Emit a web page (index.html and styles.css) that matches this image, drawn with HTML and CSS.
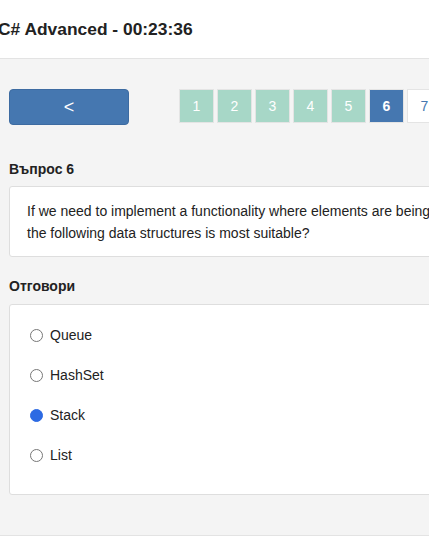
FILE: index.html
```html
<!DOCTYPE html>
<html lang="bg">
<head>
<meta charset="utf-8">
<link rel="stylesheet" href="styles.css">
</head>
<body>
<header class="topbar">
  <h1 class="title">C# Advanced - 00:23:36</h1>
</header>
<main class="content">
  <div class="nav">
    <button class="back">&lt;</button>
    <ol class="pages">
      <li class="page done">1</li>
      <li class="page done">2</li>
      <li class="page done">3</li>
      <li class="page done">4</li>
      <li class="page done">5</li>
      <li class="page active">6</li>
      <li class="page">7</li>
      <li class="page">8</li>
    </ol>
  </div>
  <h2 class="label">Въпрос 6</h2>
  <div class="box question">If we need to implement a functionality where elements are being added and removed in a last-in first-out order, which of<br>the following data structures is most suitable?</div>
  <h2 class="label">Отговори</h2>
  <div class="box answers">
    <label class="answer"><input type="radio" name="a"><span>Queue</span></label>
    <label class="answer"><input type="radio" name="a"><span>HashSet</span></label>
    <label class="answer"><input type="radio" name="a" checked><span>Stack</span></label>
    <label class="answer"><input type="radio" name="a"><span>List</span></label>
  </div>
</main>
<footer class="foot"></footer>
</body>
</html>
```
FILE: styles.css
```css
html, body {
  margin: 0;
  padding: 0;
  background: #fff;
  overflow: hidden;
}
body {
  font-family: "Liberation Sans", Arial, sans-serif;
  color: #222;
  width: 429px;
}
.topbar {
  height: 58px;
  border-bottom: 1px solid #e3e3e3;
  display: flex;
  align-items: center;
  background: #fff;
}
.title {
  margin: 0 0 0 -2px;
  font-size: 17.4px;
  font-weight: bold;
  color: #222;
  white-space: nowrap;
}
.content {
  background: #f4f4f4;
  padding: 30px 0 40px 9px;
  width: 900px;
  border-bottom: 1px solid #e3e3e3;
}
.nav {
  display: flex;
  align-items: flex-start;
  gap: 50px;
}
.back {
  width: 120px;
  height: 36px;
  background: #4577b0;
  border: 1px solid #3d6ba1;
  border-radius: 4px;
  color: #fff;
  font-family: "Liberation Sans", Arial, sans-serif;
  font-size: 18px;
  padding: 0;
  display: flex;
  align-items: center;
  justify-content: center;
}
.pages {
  list-style: none;
  margin: 0;
  padding: 0;
  display: flex;
  gap: 3px;
}
.page {
  width: 33px;
  height: 32px;
  border: 1px solid #e4e4e4;
  background: #fff;
  color: #4577b0;
  font-size: 14px;
  display: flex;
  align-items: center;
  justify-content: center;
}
.page.done {
  background: #a7d7c7;
  color: #fff;
}
.page.active {
  background: #4577b0;
  color: #fff;
  font-weight: bold;
}
.label {
  margin: 0;
  font-size: 14px;
  font-weight: bold;
  color: #222;
  line-height: 16px;
}
.nav + .label {
  margin-top: 36px;
}
.box {
  background: #fff;
  border: 1px solid #dedede;
  border-radius: 3px;
  margin-top: 9px;
  width: 800px;
}
.question {
  padding: 13px 18px 12px 17px;
  font-size: 14px;
  line-height: 22px;
  color: #222;
}
.question + .label {
  margin-top: 21px;
}
.answers {
  margin-top: 10px;
  padding: 10px 20px 19px 20px;
  display: flex;
  flex-direction: column;
}
.answer {
  height: 40px;
  display: flex;
  align-items: center;
  gap: 7px;
  font-size: 14px;
  color: #222;
}
.answer input {
  appearance: none;
  -webkit-appearance: none;
  margin: 0;
  width: 13px;
  height: 13px;
  border: 1px solid #777;
  border-radius: 50%;
  background: #fff;
  box-sizing: border-box;
}
.answer input:checked {
  background: #2c6ae3;
  border-color: #2c6ae3;
}
.foot {
  height: 20px;
  background: #fff;
}
```
